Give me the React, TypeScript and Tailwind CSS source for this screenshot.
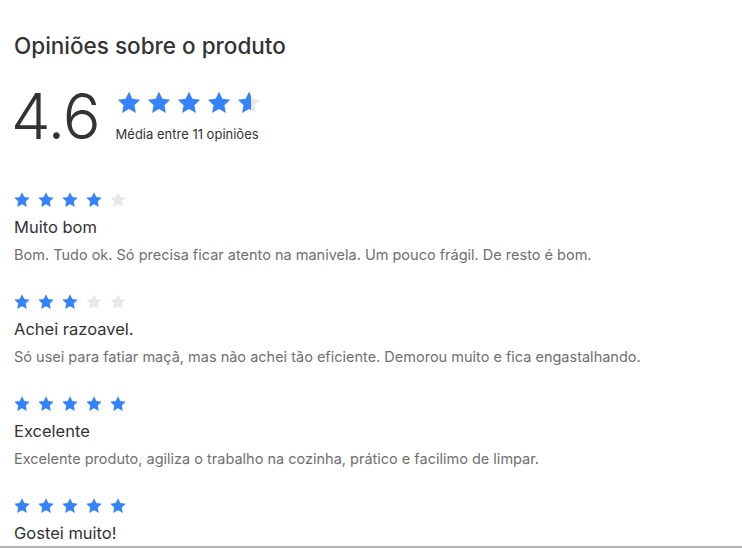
import React from 'react';

const BLUE = '#3483fa';
const GRAY = '#e8e8e8';

const STAR = 'M12 1.5l3.1 6.6 7.2.9-5.3 5 1.4 7.2L12 17.6l-6.4 3.6 1.4-7.2-5.3-5 7.2-.9z';

/**
 * Single star, fill is a fraction from 0 to 1
 */
const Star = ({ fill, size, id }: { fill: number; size: number; id: string }) => (
  <svg width={size} height={size} viewBox="0 0 24 24" className="shrink-0">
    <defs>
      <linearGradient id={id} x1="0" x2="1" y1="0" y2="0">
        <stop offset={fill} stopColor={BLUE} />
        <stop offset={fill} stopColor={GRAY} />
      </linearGradient>
    </defs>
    <path d={STAR} fill={`url(#${id})`} />
  </svg>
);

const Stars = ({ value, size, gap, prefix }: { value: number; size: number; gap: string; prefix: string }) => (
  <div className={`flex items-center ${gap}`}>
    {[0, 1, 2, 3, 4].map((i) => (
      <Star key={i} id={`${prefix}-${i}`} size={size} fill={Math.max(0, Math.min(1, value - i))} />
    ))}
  </div>
);

const reviews = [
  {
    rating: 4,
    title: 'Muito bom',
    text: 'Bom. Tudo ok. Só precisa ficar atento na manivela. Um pouco frágil. De resto é bom.',
  },
  {
    rating: 3,
    title: 'Achei razoavel.',
    text: 'Só usei para fatiar maçã, mas não achei tão eficiente. Demorou muito e fica engastalhando.',
  },
  {
    rating: 5,
    title: 'Excelente',
    text: 'Excelente produto, agiliza o trabalho na cozinha, prático e facilimo de limpar.',
  },
  {
    rating: 5,
    title: 'Gostei muito!',
    text: '',
  },
];

export default function App() {
  return (
    <div
      className="h-[548px] w-full overflow-hidden bg-white border-b-2 border-[#b8b8b8]"
      style={{ fontFamily: 'Inter, "Noto Sans", sans-serif' }}
    >
      <div className="px-[14px] pt-[32px]">
        <h2 className="text-[22.5px] leading-[28px] font-medium text-[#333]">Opiniões sobre o produto</h2>

        <div className="mt-[24px] flex items-center gap-[16px]">
          <div className="-ml-[3px] text-[63px] leading-[64px] font-light text-[#333] tracking-[-1px]">4.6</div>
          <div className="flex flex-col">
            <Stars value={4.6} size={26} gap="gap-[4px]" prefix="avg" />
            <div className="mt-[10px] text-[13px] leading-[16px] text-[#333]">Média entre 11 opiniões</div>
          </div>
        </div>

        <div className="mt-[43px] flex flex-col gap-[29px]">
          {reviews.map((r, idx) => (
            <div key={idx} className="flex flex-col">
              <div className="-ml-[1px]">
                <Stars value={r.rating} size={18} gap="gap-[6px]" prefix={`r${idx}`} />
              </div>
              <div className="mt-[7px] text-[16.5px] leading-[22px] text-[#333]">{r.title}</div>
              {r.text && (
                <div className="mt-[8px] text-[14.5px] leading-[18px] text-[#707070]">{r.text}</div>
              )}
            </div>
          ))}
        </div>
      </div>
    </div>
  );
}
